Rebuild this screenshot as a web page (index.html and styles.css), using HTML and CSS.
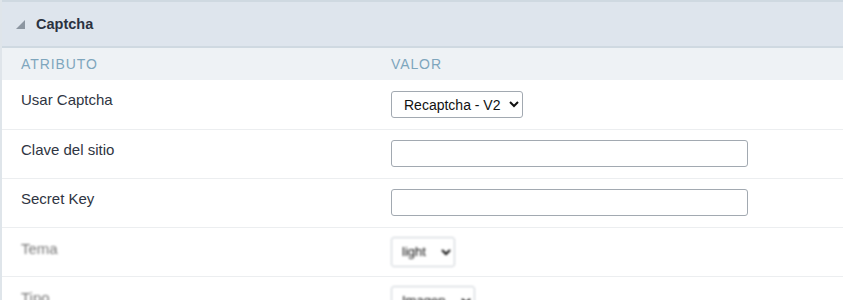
FILE: index.html
```html
<!DOCTYPE html>
<html lang="es">
<head>
    <meta charset="UTF-8">
    <meta name="viewport" content="width=device-width, initial-scale=1">
    <title>Captcha</title>
    <link rel="stylesheet" href="styles.css">
</head>
<body>

<div class="panel">
    <div class="panel-title">
        <span class="arrow"></span>
        <span>Captcha</span>
    </div>

    <table class="attr-table">
        <thead>
            <tr>
                <th class="col-attr">Atributo</th>
                <th>Valor</th>
            </tr>
        </thead>
        <tbody>
            <tr>
                <td>Usar Captcha</td>
                <td>
                    <select class="sel sel-main">
                        <option>Recaptcha - V2</option>
                    </select>
                </td>
            </tr>
            <tr>
                <td>Clave del sitio</td>
                <td><input type="text" class="txt"></td>
            </tr>
            <tr>
                <td>Secret Key</td>
                <td><input type="text" class="txt"></td>
            </tr>
            <!-- rows below are faded in the original capture -->
            <tr class="faded">
                <td>Tema</td>
                <td>
                    <select class="sel sel-small">
                        <option>light</option>
                    </select>
                </td>
            </tr>
            <tr class="faded">
                <td>Tipo</td>
                <td>
                    <select class="sel sel-small sel-wide">
                        <option>Imagen</option>
                    </select>
                </td>
            </tr>
        </tbody>
    </table>
</div>

</body>
</html>
```

FILE: styles.css
```css
body {
    margin: 0;
    font-family: "Liberation Sans", Arial, sans-serif;
    background-color: #fff;
    overflow: hidden;
}

.panel {
    border-left: 2px solid #dfe5ea;
}

.panel-title {
    display: flex;
    align-items: center;
    height: 44px;
    background-color: #dee5ed;
    border-top: 2px solid #cfd9e1;
    border-bottom: 2px solid #cfd9e1;
    padding-left: 14px;
    font-size: 14.5px;
    font-weight: bold;
    color: #2b3240;
}

.arrow {
    width: 0;
    height: 0;
    border-left: 9px solid transparent;
    border-bottom: 9px solid #8c96a1;
    margin-right: 11px;
    margin-top: 1px;
}

.attr-table {
    width: 100%;
    border-collapse: collapse;
}

.attr-table th {
    height: 32px;
    background-color: #eef2f5;
    text-align: left;
    font-weight: normal;
    font-size: 14px;
    letter-spacing: 0.9px;
    text-transform: uppercase;
    color: #7ea6bd;
    padding: 0 0 0 19px;
}

.attr-table th.col-attr {
    width: 351px;
}

.attr-table td {
    height: 49px;
    border-bottom: 1px solid #eceef0;
    font-size: 15px;
    color: #2f3542;
    vertical-align: top;
    padding: 11px 0 0 19px;
    box-sizing: border-box;
}

.sel {
    font-family: "Liberation Sans", Arial, sans-serif;
    font-size: 14px;
    color: #111;
    background-color: #fff;
    border: 1px solid #a2a9b1;
    border-radius: 3px;
    height: 27px;
    padding: 0 2px 0 8px;
}

.sel-main {
    width: 132px;
}

.sel-small {
    width: 64px;
    height: 30px;
    font-size: 13px;
    border-color: #c8ced4;
    margin-top: -2px;
    padding-left: 6px;
}

.sel-wide {
    width: 84px;
}

.txt {
    width: 357px;
    height: 27px;
    box-sizing: border-box;
    border: 1px solid #a2a9b1;
    border-radius: 3px;
    margin-top: -1px;
}

.faded td {
    color: #777;
    filter: blur(0.8px);
}

.faded td:first-child {
    padding-top: 12px;
}
```
